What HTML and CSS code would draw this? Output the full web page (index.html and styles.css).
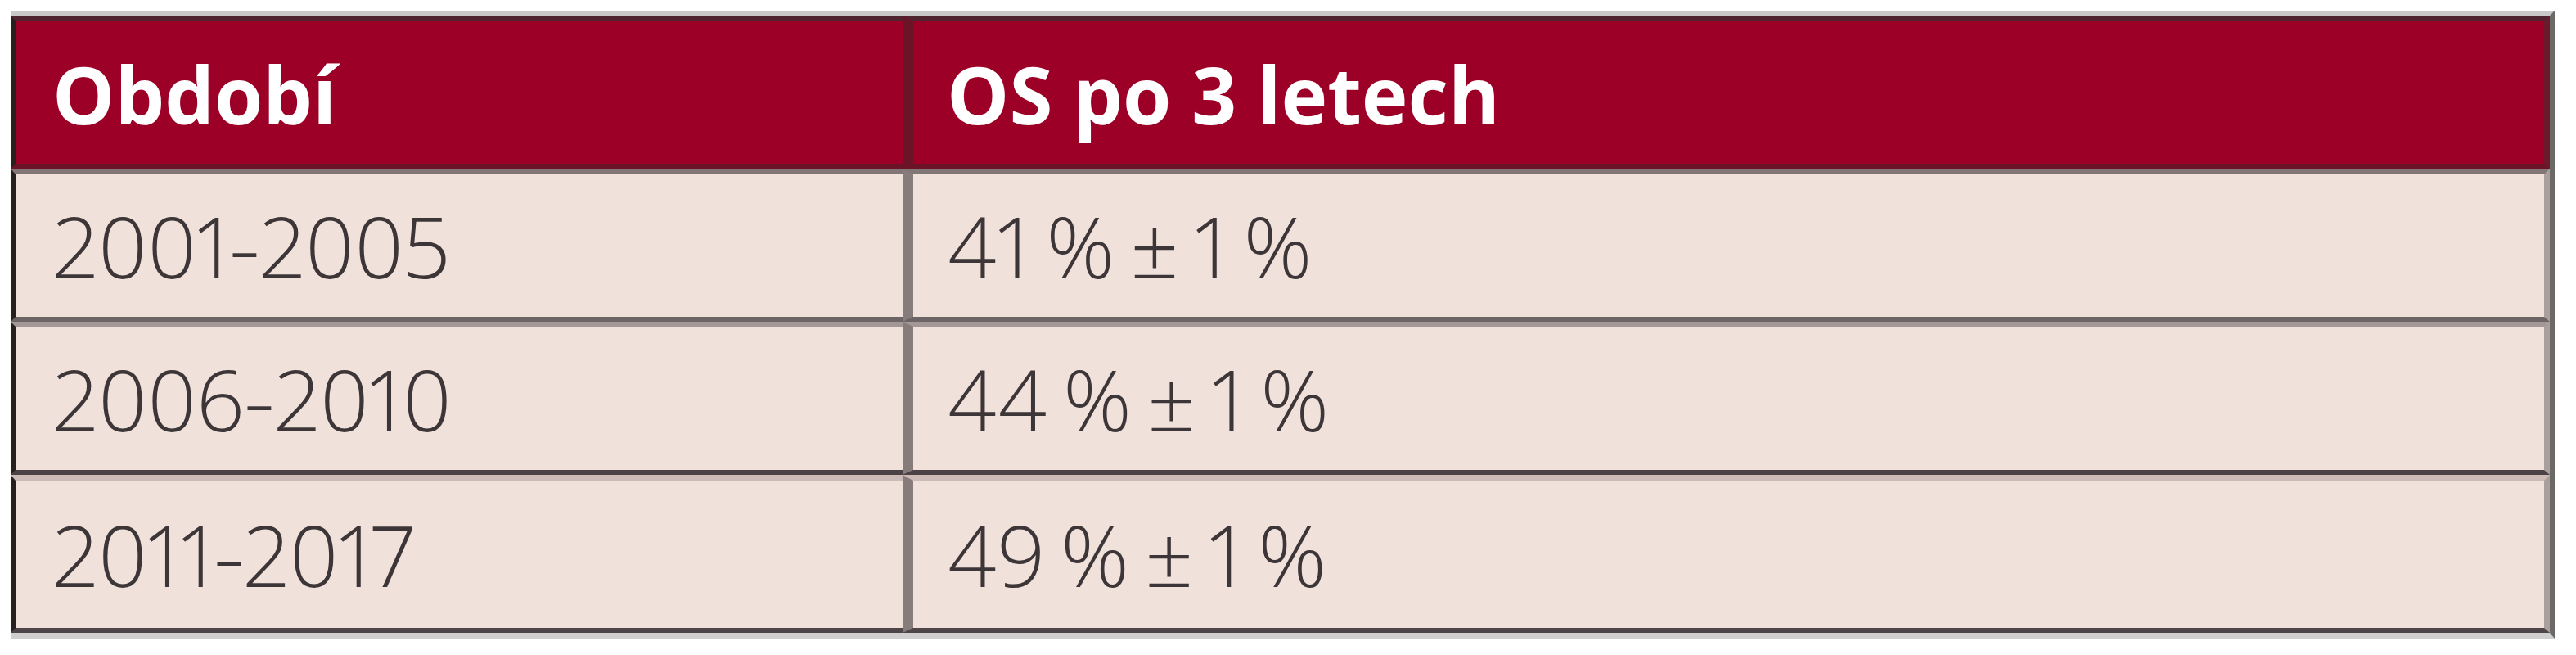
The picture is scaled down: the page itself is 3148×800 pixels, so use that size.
FILE: index.html
```html
<!DOCTYPE html>
<html lang="cs">
<head>
<meta charset="utf-8">
<title>OS po 3 letech</title>
<link rel="stylesheet" href="styles.css">
</head>
<body>
<div class="tbl" role="table">
  <div class="cell head first" role="columnheader">Období</div>
  <div class="cell head second" role="columnheader">OS po 3 letech</div>

  <div class="cell r1 first" role="cell">2001<span class="dash">–</span>2005</div>
  <div class="cell r1 second" role="cell">41 % ± 1 %</div>

  <div class="cell r2 first" role="cell">2006<span class="dash">–</span>2010</div>
  <div class="cell r2 second" role="cell">44 % ± 1 %</div>

  <div class="cell r3 first" role="cell">2011<span class="dash">–</span>2017</div>
  <div class="cell r3 second" role="cell">49 % ± 1 %</div>
</div>
</body>
</html>
```

FILE: styles.css
```css
html, body {
  margin: 0;
  padding: 0;
  background: #ffffff;
}

.tbl {
  margin: 13px 0 0 13px;
  width: 3103px;
  display: grid;
  grid-template-columns: 1090px 2013px;
  border-top: 6px solid #c8c8c8;
  border-bottom: 7px solid #cfcfcf;
  border-right: 6px solid #6b6868;
  font-family: "Open Sans", "Liberation Sans", sans-serif;
}

.cell {
  box-sizing: border-box;
  display: flex;
  align-items: center;
  background: #f1e1db;
  color: #3d3638;
  font-weight: 300;
  font-size: 104px;
  line-height: 1;
  white-space: nowrap;
  font-variant-numeric: proportional-nums;
}

.dash {
  display: inline-block;
  transform: scaleX(0.66);
  margin: 0 -8px;
}

.first {
  border-left: 6px solid #28201f;
  padding-left: 45px;
}

.second {
  border-left: 13px solid #877c7c;
  border-right: 7px solid #aa9f9c;
  padding-left: 41px;
  word-spacing: -8px;
}

.head {
  background: #9c0027;
  color: #ffffff;
  font-weight: 700;
  font-size: 96px;
  height: 187px;
  border-top: 7px solid #4f2430;
  border-bottom: 6px solid #6b1428;
  padding-top: 4px;
  word-spacing: 0;
}

.head.second {
  border-left-color: #6b1428;
  border-right-color: #6b1a2c;
}

.r1 {
  height: 187px;
  border-top: 7px solid #827676;
  border-bottom: 6px solid #6d6466;
}

.r2 {
  height: 187px;
  border-top: 6px solid #a39896;
  border-bottom: 6px solid #4a4244;
}

.r3 {
  height: 193px;
  border-top: 7px solid #cbbab6;
  border-bottom: 6px solid #4d4547;
}
```
